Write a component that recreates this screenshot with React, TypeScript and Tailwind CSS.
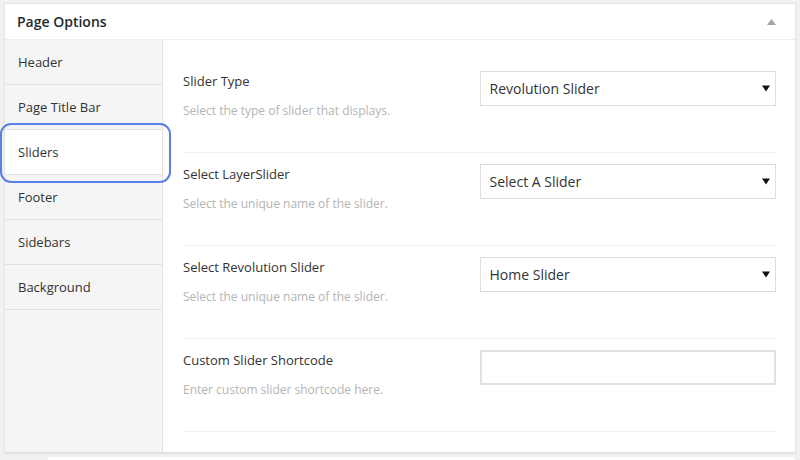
const tabs = ["Header", "Page Title Bar", "Sliders", "Footer", "Sidebars", "Background"];

const rows = [
  { label: "Slider Type", desc: "Select the type of slider that displays.", value: "Revolution Slider" },
  { label: "Select LayerSlider", desc: "Select the unique name of the slider.", value: "Select A Slider" },
  { label: "Select Revolution Slider", desc: "Select the unique name of the slider.", value: "Home Slider" },
  { label: "Custom Slider Shortcode", desc: "Enter custom slider shortcode here.", value: null },
];

function Caret() {
  return (
    <svg width="8" height="7" viewBox="0 0 8 7" className="shrink-0">
      <path d="M0 0.5 L8 0.5 L4 6.5 Z" fill="#111" />
    </svg>
  );
}

export default function App() {
  return (
    <div
      className="w-[800px] h-[460px] overflow-hidden bg-[#f1f1f1] pt-[3px] pl-[4px]"
      style={{ fontFamily: '"Open Sans", "Noto Sans", sans-serif' }}
    >
      <div className="w-[792px] h-[450px] bg-white border border-[#e5e5e5] shadow-[0_1px_1px_rgba(0,0,0,0.06)] flex flex-col">
        {/* header */}
        <div className="h-[36px] shrink-0 border-b border-[#eeeeee] flex items-center justify-between pl-[12px] pr-[19px]">
          <span className="text-[14px] font-semibold text-[#23282d]">Page Options</span>
          <svg width="9" height="6" viewBox="0 0 9 6">
            <path d="M4.5 0 L9 6 L0 6 Z" fill="#a0a5aa" />
          </svg>
        </div>

        <div className="flex flex-1 min-h-0">
          {/* tabs */}
          <div className="w-[158px] shrink-0 bg-[#f5f5f5] border-r border-[#e4e0e0]">
            {tabs.map((t) => (
              <div
                key={t}
                className={
                  "relative h-[45px] border-b border-[#e4e0e0] flex items-center pl-[13px] pt-[2px] text-[13px] text-[#333] " +
                  (t === "Sliders" ? "bg-white" : "")
                }
              >
                {t}
                {t === "Sliders" && (
                  <div className="absolute -left-[5px] -right-[9px] -top-[7px] -bottom-[9px] border-2 border-[#5b7fe8] rounded-[11px]" />
                )}
              </div>
            ))}
          </div>

          {/* options */}
          <div className="flex-1 pt-[20px] pl-[20px] pr-[19px]">
            {rows.map((r) => (
              <div key={r.label} className="h-[93px] border-b border-[#f1f1f1] pt-[11px] grid grid-cols-2">
                <div>
                  <div className="text-[13px] leading-[20px] text-[#333]">{r.label}</div>
                  <div className="mt-[11px] text-[12px] leading-[18px] text-[#b4b4b4]">{r.desc}</div>
                </div>
                {r.value ? (
                  <div className="h-[35px] border border-[#dddddd] bg-white flex items-center justify-between pl-[9px] pr-[5px]">
                    <span className="text-[14px] text-[#333]">{r.value}</span>
                    <Caret />
                  </div>
                ) : (
                  <div className="h-[35px] border-2 border-[#e2e2e2] bg-white" />
                )}
              </div>
            ))}
          </div>
        </div>
      </div>
      <div className="mt-[4px] ml-[44px] w-[747px] h-[10px] bg-white" />
    </div>
  );
}
